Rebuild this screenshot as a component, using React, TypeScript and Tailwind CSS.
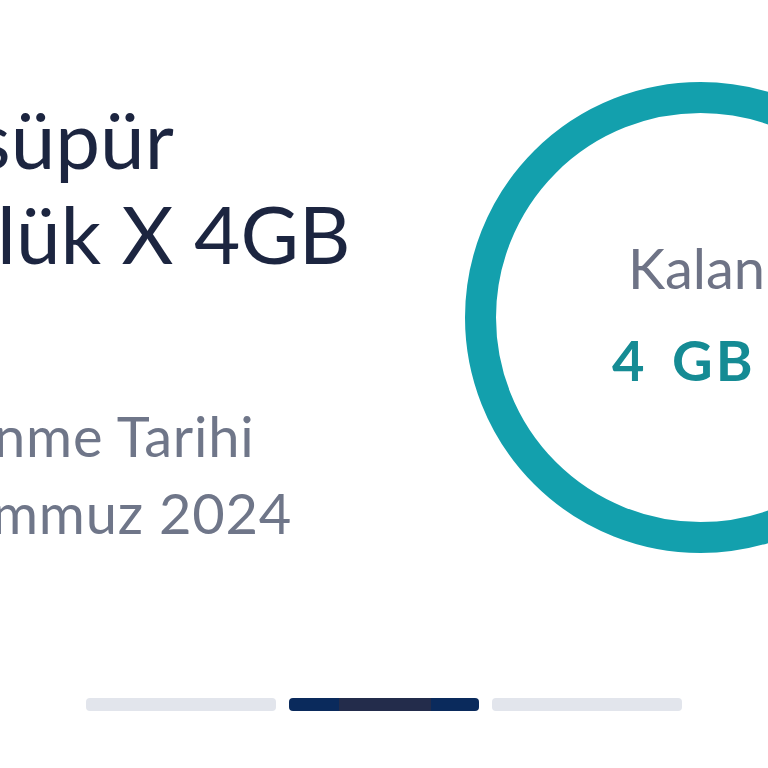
export default function App() {
  return (
    <div className="relative h-[768px] w-[768px] overflow-hidden bg-white font-['Lato','Noto_Sans',sans-serif]">
      <div className="flex items-start">
        <div className="w-[465px] shrink-0 pt-[91px]">
          <h1 className="text-[80px] font-normal leading-[95px] text-[#1c2540] whitespace-nowrap">
            <span className="-ml-[24px] block">süpür</span>
            <span className="-ml-[3px] block">lük X 4GB</span>
          </h1>
          <div className="mt-[116px] text-[56px] leading-[77px] tracking-[0.8px] text-[#6f7689] whitespace-nowrap">
            <span className="-ml-[6px] block">nme Tarihi</span>
            <span className="-ml-[8px] block">mmuz 2024</span>
          </div>
        </div>
        <div className="mt-[82px] h-[471px] w-[471px] shrink-0 rounded-full border-[31px] border-[#13a0ad]">
          <div className="flex flex-col pl-[116px] pt-[123px] whitespace-nowrap">
            <span className="ml-[16px] text-[56px] leading-[64px] text-[#6e7386]">Kalan</span>
            <span className="mt-[28px] text-[56px] font-bold leading-[64px] tracking-[3px] [word-spacing:8px] text-[#158b94]">
              4 GB
            </span>
          </div>
        </div>
      </div>
      <div className="mt-[145px] flex justify-center gap-[13px]">
        <div className="h-[13px] w-[190px] rounded-[4px] bg-[#e2e5ec]" />
        <div className="flex h-[13px] w-[190px] rounded-[4px] bg-[#0a2a5c] pl-[50px]">
          <div className="h-full w-[92px] bg-[#232c4b]" />
        </div>
        <div className="h-[13px] w-[190px] rounded-[4px] bg-[#e2e5ec]" />
      </div>
    </div>
  );
}
